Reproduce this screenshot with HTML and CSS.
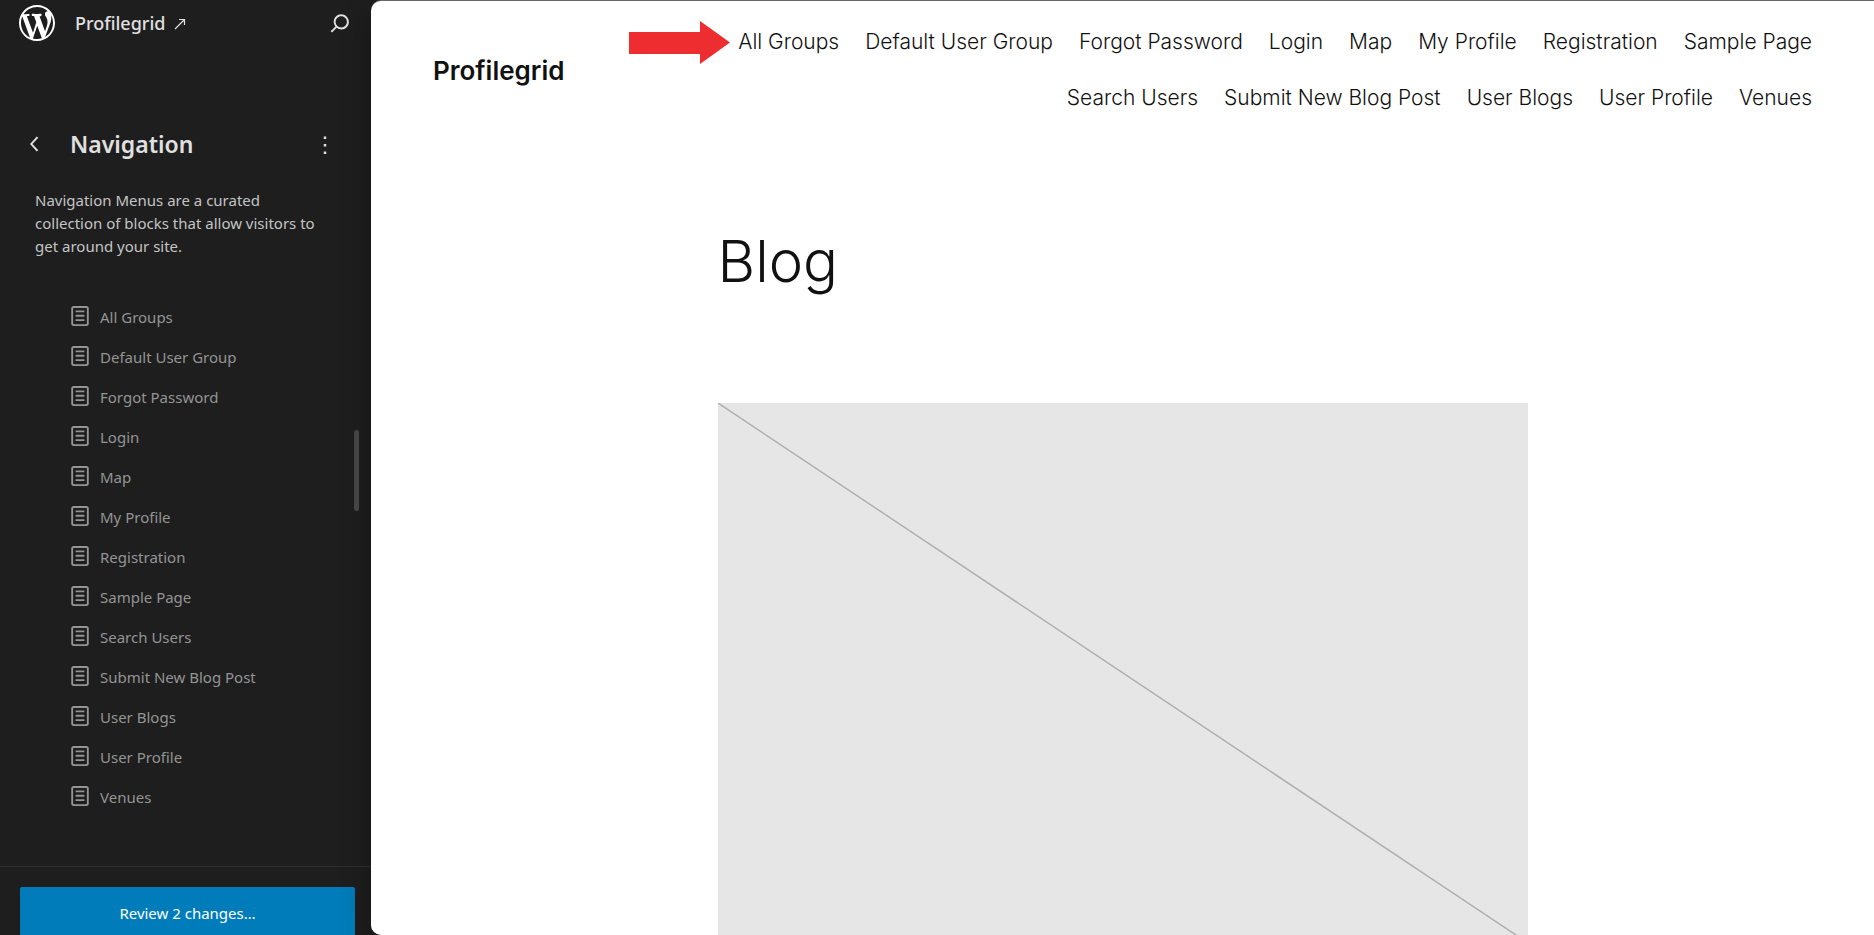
FILE: index.html
```html
<!DOCTYPE html>
<html lang="en">
<head>
    <meta charset="UTF-8">
    <meta name="viewport" content="width=device-width, initial-scale=1.0">
    <title>Navigation - Profilegrid</title>
    <link rel="stylesheet" href="styles.css">
</head>
<body>
    <!-- shared icon used by every menu row -->
    <svg class="sprite" aria-hidden="true">
        <symbol id="page" viewBox="0 0 24 24">
            <path d="M15.5 7.5h-7V9h7V7.5Zm-7 3.5h7v1.5h-7V11Zm7 3.5h-7V16h7v-1.5Z"/>
            <path d="M17 4H7a2 2 0 0 0-2 2v12a2 2 0 0 0 2 2h10a2 2 0 0 0 2-2V6a2 2 0 0 0-2-2ZM7 5.5h10a.5.5 0 0 1 .5.5v12a.5.5 0 0 1-.5.5H7a.5.5 0 0 1-.5-.5V6a.5.5 0 0 1 .5-.5Z"/>
        </symbol>
    </svg>

    <div class="layout">
        <aside class="sidebar">
            <div class="hub">
                <a class="hub-logo" href="#" aria-label="Dashboard">
                    <svg viewBox="0 0 20 20" width="36" height="36"><path d="M20 10c0-5.51-4.49-10-10-10C4.48 0 0 4.49 0 10c0 5.52 4.48 10 10 10 5.51 0 10-4.48 10-10zM7.78 15.37L4.37 6.22c.55-.02 1.17-.08 1.17-.08.5-.06.44-1.13-.06-1.11 0 0-1.45.11-2.37.11-.18 0-.37 0-.58-.01C4.12 2.69 6.87 1.11 10 1.11c2.33 0 4.45.87 6.05 2.34-.68-.11-1.65.39-1.65 1.58 0 .74.45 1.36.9 2.1.35.61.55 1.36.55 2.46 0 1.49-1.4 5-1.4 5l-3.03-8.37c.54-.02.82-.17.82-.17.5-.05.44-1.25-.06-1.22 0 0-1.44.12-2.38.12-.87 0-2.33-.12-2.33-.12-.5-.03-.56 1.2-.06 1.22l.92.08 1.26 3.41zM17.41 10c.24-.64.74-1.87.43-4.25.7 1.29 1.05 2.71 1.05 4.25 0 3.29-1.73 6.24-4.4 7.78.97-2.59 1.94-5.2 2.92-7.78zM6.1 18.09C3.12 16.65 1.11 13.53 1.11 10c0-1.3.23-2.48.72-3.59C3.25 10.3 4.67 14.2 6.1 18.09zm4.03-6.63l2.58 6.98c-.86.29-1.76.45-2.71.45-.79 0-1.57-.11-2.29-.33.81-2.38 1.62-4.74 2.42-7.1z"/></svg>
                </a>
                <a class="hub-title" href="#">Profilegrid
                    <svg viewBox="0 0 12 14" width="12" height="14"><path d="M1 13 10.500 3.500M5 3.500h5.500v5.500" fill="none" stroke="currentColor" stroke-width="1.2"/></svg>
                </a>
                <button class="icon-btn" type="button" aria-label="Search">
                    <svg viewBox="0 0 24 24" width="30" height="30"><path d="M13 5c-3.3 0-6 2.7-6 6 0 1.4.5 2.7 1.3 3.7l-3.8 3.8 1.1 1.1 3.8-3.8c1 .8 2.3 1.3 3.7 1.3 3.3 0 6-2.7 6-6S16.3 5 13 5zm0 10.5c-2.5 0-4.5-2-4.5-4.5s2-4.5 4.5-4.5 4.5 2 4.5 4.5-2 4.5-4.5 4.5z"/></svg>
                </button>
            </div>

            <div class="panel">
                <div class="panel-head">
                    <button class="icon-btn" type="button" aria-label="Back">
                        <svg viewBox="0 0 24 24" width="30" height="30"><path d="M14.6 7l-1.2-1L8 12l5.4 6 1.2-1-4.6-5z"/></svg>
                    </button>
                    <h1 class="panel-title">Navigation</h1>
                    <button class="icon-btn" type="button" aria-label="Actions">
                        <svg viewBox="0 0 24 24" width="30" height="30"><path d="M13 20h-2v-2h2v2zm0-6h-2v-2h2v2zm0-6h-2V6h2v2z"/></svg>
                    </button>
                </div>
                <p class="panel-text">Navigation Menus are a curated collection of blocks that allow visitors to get around your site.</p>
                <ul class="menu">
                    <li><a href="#"><svg class="menu-icon"><use href="#page"/></svg>All Groups</a></li>
                    <li><a href="#"><svg class="menu-icon"><use href="#page"/></svg>Default User Group</a></li>
                    <li><a href="#"><svg class="menu-icon"><use href="#page"/></svg>Forgot Password</a></li>
                    <li><a href="#"><svg class="menu-icon"><use href="#page"/></svg>Login</a></li>
                    <li><a href="#"><svg class="menu-icon"><use href="#page"/></svg>Map</a></li>
                    <li><a href="#"><svg class="menu-icon"><use href="#page"/></svg>My Profile</a></li>
                    <li><a href="#"><svg class="menu-icon"><use href="#page"/></svg>Registration</a></li>
                    <li><a href="#"><svg class="menu-icon"><use href="#page"/></svg>Sample Page</a></li>
                    <li><a href="#"><svg class="menu-icon"><use href="#page"/></svg>Search Users</a></li>
                    <li><a href="#"><svg class="menu-icon"><use href="#page"/></svg>Submit New Blog Post</a></li>
                    <li><a href="#"><svg class="menu-icon"><use href="#page"/></svg>User Blogs</a></li>
                    <li><a href="#"><svg class="menu-icon"><use href="#page"/></svg>User Profile</a></li>
                    <li><a href="#"><svg class="menu-icon"><use href="#page"/></svg>Venues</a></li>
                </ul>
                <div class="scroll-thumb"></div>
            </div>

            <div class="save">
                <button class="save-btn" type="button">Review 2 changes…</button>
            </div>
        </aside>

        <main class="canvas">
            <header class="site-header">
                <a class="site-title" href="#">Profilegrid</a>
                <nav class="site-nav">
                    <span class="first">
                        <svg class="arrow" viewBox="0 0 101 43" width="101" height="43"><path d="M0 11h71V0l30 21.500-30 21.500V33H0z"/></svg>
                        <a href="#">All Groups</a>
                    </span>
                    <a href="#">Default User Group</a>
                    <a href="#">Forgot Password</a>
                    <a href="#">Login</a>
                    <a href="#">Map</a>
                    <a href="#">My Profile</a>
                    <a href="#">Registration</a>
                    <a href="#">Sample Page</a>
                    <a href="#">Search Users</a>
                    <a href="#">Submit New Blog Post</a>
                    <a href="#">User Blogs</a>
                    <a href="#">User Profile</a>
                    <a href="#">Venues</a>
                </nav>
            </header>
            <article class="content">
                <h2 class="page-title">Blog</h2>
                <svg class="placeholder" viewBox="0 0 810 540">
                    <line x1="0" y1="0" x2="810" y2="540"/>
                </svg>
            </article>
        </main>
    </div>
</body>
</html>
```
FILE: styles.css
```css
*{
    box-sizing: border-box;
    padding: 0;
    margin: 0;
}
body{
    background-color: #1e1e1e;
    font-family: "Noto Sans", "Open Sans", sans-serif;
    overflow: hidden;
}
a{
    color: inherit;
    text-decoration: none;
}
svg{
    display: block;
    fill: currentColor;
}
.sprite{
    display: none;
}
.layout{
    display: grid;
    grid-template-columns: 371px 1fr;
    height: 100vh;
}

/* sidebar */
.sidebar{
    display: flex;
    flex-direction: column;
    min-height: 0;
    color: #e0e0e0;
}
.hub{
    display: flex;
    align-items: center;
    padding: 5px 16px 0 19px;
}
.hub-logo{
    color: #fff;
}
.hub-title{
    display: flex;
    align-items: center;
    gap: 8px;
    margin-left: 20px;
    margin-right: auto;
    font-size: 18px;
    font-weight: 500;
}
.icon-btn{
    border: 0;
    background: none;
    color: #e0e0e0;
}
.panel{
    position: relative;
    flex: 1;
    padding: 87px 31px 0 20px;
}
.panel-head{
    display: flex;
    align-items: center;
}
.panel-title{
    flex: 1;
    margin-left: 20px;
    font-size: 23px;
    font-weight: 600;
    line-height: 32px;
}
.panel-text{
    margin: 29px 15px 0 15px;
    color: #c4c4c4;
    font-size: 15px;
    line-height: 23px;
}
.menu{
    margin: 39px 0 0 45px;
    list-style: none;
}
.menu a{
    display: flex;
    align-items: center;
    gap: 5px;
    height: 40px;
    color: #949494;
    font-size: 15px;
}
.menu-icon{
    width: 30px;
    height: 30px;
    margin-bottom: 2px;
}
.scroll-thumb{
    position: absolute;
    top: 389px;
    right: 12px;
    width: 5px;
    height: 81px;
    border-radius: 3px;
    background-color: #454545;
}
.save{
    height: 69px;
    padding: 20px 16px 0 20px;
    border-top: 1px solid #2f2f2f;
}
.save-btn{
    width: 100%;
    height: 52px;
    border: 0;
    border-radius: 2px;
    background-color: #007cba;
    color: #fff;
    font-family: inherit;
    font-size: 15px;
}

/* site preview */
.canvas{
    margin-top: 1px;
    border-radius: 10px 0 0 10px;
    background-color: #fff;
    box-shadow: 0 -1px 0 #666, 0 10px 30px rgba(0, 0, 0, 0.3);
    color: #111;
    font-family: Inter, "Liberation Sans", sans-serif;
    overflow: hidden;
}
.site-header{
    display: flex;
    align-items: center;
    gap: 48px;
    padding: 24px 62px;
}
.site-title{
    font-size: 26px;
    font-weight: 600;
}
.site-nav{
    flex: 1;
    display: flex;
    flex-wrap: wrap;
    justify-content: flex-end;
    gap: 22px 26px;
    font-size: 21px;
    font-weight: 300;
    line-height: 34px;
}
.first{
    position: relative;
}
.arrow{
    position: absolute;
    top: -4px;
    right: calc(100% + 8px);
    color: #ee2d30;
}
.content{
    width: 810px;
    max-width: 100%;
    margin: 0 auto;
    padding-top: 88px;
}
.page-title{
    font-size: 58px;
    font-weight: 300;
    line-height: 68px;
}
.placeholder{
    width: 100%;
    margin-top: 108px;
    background-color: #e6e6e6;
}
.placeholder line{
    stroke: #b0b0b0;
    stroke-width: 1.5;
}
```
